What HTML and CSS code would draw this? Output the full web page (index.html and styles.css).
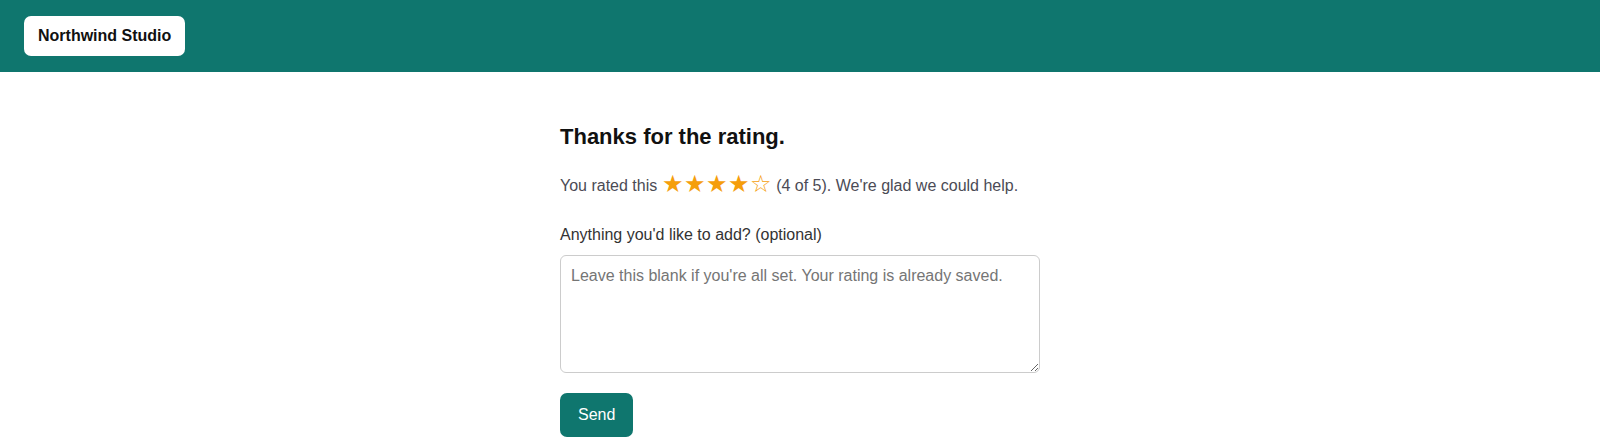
FILE: index.html
```html
<!DOCTYPE html>
<html lang="en">
<head>
<meta charset="utf-8">
<title>Northwind Studio</title>
<link rel="stylesheet" href="styles.css">
</head>
<body>
<header class="topbar">
  <div class="brand">Northwind Studio</div>
</header>
<main class="content">
  <h1 class="title">Thanks for the rating.</h1>
  <p class="rated">You rated this <span class="stars" aria-label="4 of 5 stars">★★★★☆</span> (4 of 5). We're glad we could help.</p>
  <label class="label" for="note">Anything you'd like to add? (optional)</label>
  <textarea id="note" class="note" placeholder="Leave this blank if you're all set. Your rating is already saved."></textarea>
  <button class="send" type="button">Send</button>
</main>
</body>
</html>
```
FILE: styles.css
```css
* { box-sizing: border-box; }
html, body { margin: 0; padding: 0; }
body {
  font-family: "Liberation Sans", Arial, sans-serif;
  background: #ffffff;
  color: #111111;
}
.topbar {
  background: #0f766e;
  height: 72px;
  padding: 16px 24px;
  display: flex;
  align-items: flex-start;
}
.brand {
  background: #ffffff;
  color: #111111;
  font-weight: 700;
  font-size: 16px;
  line-height: 20px;
  padding: 10px 14px;
  border-radius: 7px;
}
.content {
  width: 480px;
  margin: 0 auto;
  padding-top: 51px;
  display: flex;
  flex-direction: column;
  align-items: flex-start;
}
.title {
  margin: 0;
  font-size: 22px;
  line-height: 28px;
  font-weight: 700;
  color: #111111;
}
.rated {
  margin: 19px 0 0;
  font-size: 16px;
  line-height: 28px;
  color: #4b4b55;
}
.stars {
  color: #f59e0b;
  font-size: 24px;
  letter-spacing: 0;
  vertical-align: -1px;
}
.label {
  margin-top: 25px;
  font-size: 16px;
  line-height: 20px;
  color: #333333;
}
.note {
  margin-top: 10px;
  width: 480px;
  height: 118px;
  padding: 10px;
  border: 1px solid #cccccc;
  border-radius: 6px;
  font-family: "Liberation Sans", Arial, sans-serif;
  font-size: 16px;
  line-height: 20px;
  color: #111111;
  resize: vertical;
}
.note::placeholder { color: #757575; }
.send {
  margin-top: 20px;
  background: #0f766e;
  color: #ffffff;
  border: 0;
  border-radius: 7px;
  font-family: "Liberation Sans", Arial, sans-serif;
  font-size: 16px;
  line-height: 20px;
  padding: 12px 18px;
}
```
